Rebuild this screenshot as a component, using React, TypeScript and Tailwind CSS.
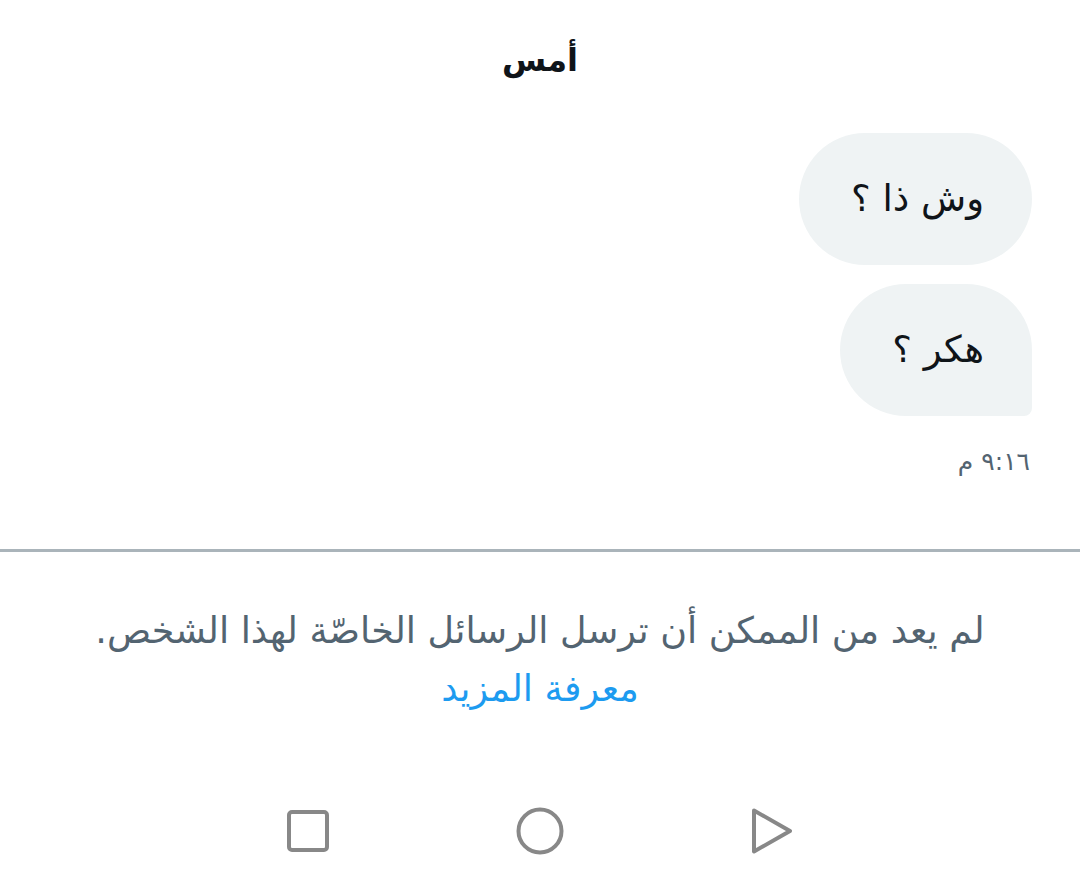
import React from 'react'

const font = { fontFamily: '"DejaVu Sans", "Noto Sans", sans-serif' }

function Bubble({ text, last }: { text: string; last?: boolean }) {
  return (
    <div
      className={
        'bg-[#eff3f4] py-[40px] pr-[48px] pl-[52px] text-[37px] leading-[52px] text-[#0f1419] ' +
        (last ? 'rounded-[66px] rounded-br-[8px]' : 'rounded-[66px]')
      }
    >
      {text}
    </div>
  )
}

function NavBar() {
  return (
    <div dir="ltr" className="flex h-[120px] items-center justify-center gap-[184px] pb-[6px]">
      <svg width="46" height="46" viewBox="0 0 46 46" fill="none">
        <rect x="4" y="4" width="38" height="38" rx="3" stroke="#888888" strokeWidth="4" />
      </svg>
      <svg width="50" height="50" viewBox="0 0 50 50" fill="none">
        <circle cx="25" cy="25" r="21.5" stroke="#888888" strokeWidth="4" />
      </svg>
      <svg width="46" height="50" viewBox="0 0 46 50" fill="none">
        <path d="M5 4.5 L41 25 L5 45.5 Z" stroke="#888888" strokeWidth="4" strokeLinejoin="round" />
      </svg>
    </div>
  )
}

export default function App() {
  return (
    <div dir="rtl" style={font} className="flex h-[894px] w-[1080px] flex-col overflow-hidden bg-white">
      <div className="pt-[36px] text-center text-[32px] font-bold leading-[48px] text-[#0f1419]">
        أمس
      </div>

      <div className="flex flex-col items-start gap-[19px] px-[48px] pt-[49px]">
        <Bubble text="وش ذا ؟" />
        <Bubble text="هكر ؟" last />
      </div>

      <div className="px-[50px] pt-[30px] text-[25px] leading-[32px] text-[#536471]">٩:١٦ م</div>

      <div className="mt-[71px] h-[3px] bg-[#aab4ba]" />

      <div className="flex flex-col items-center pt-[50px] text-center text-[36.5px] leading-[58px]">
        <p className="text-[#536471]">لم يعد من الممكن أن ترسل الرسائل الخاصّة لهذا الشخص.</p>
        <a href="#" className="text-[#1d9bf0]">
          معرفة المزيد
        </a>
      </div>

      <div className="flex-1" />
      <NavBar />
    </div>
  )
}
